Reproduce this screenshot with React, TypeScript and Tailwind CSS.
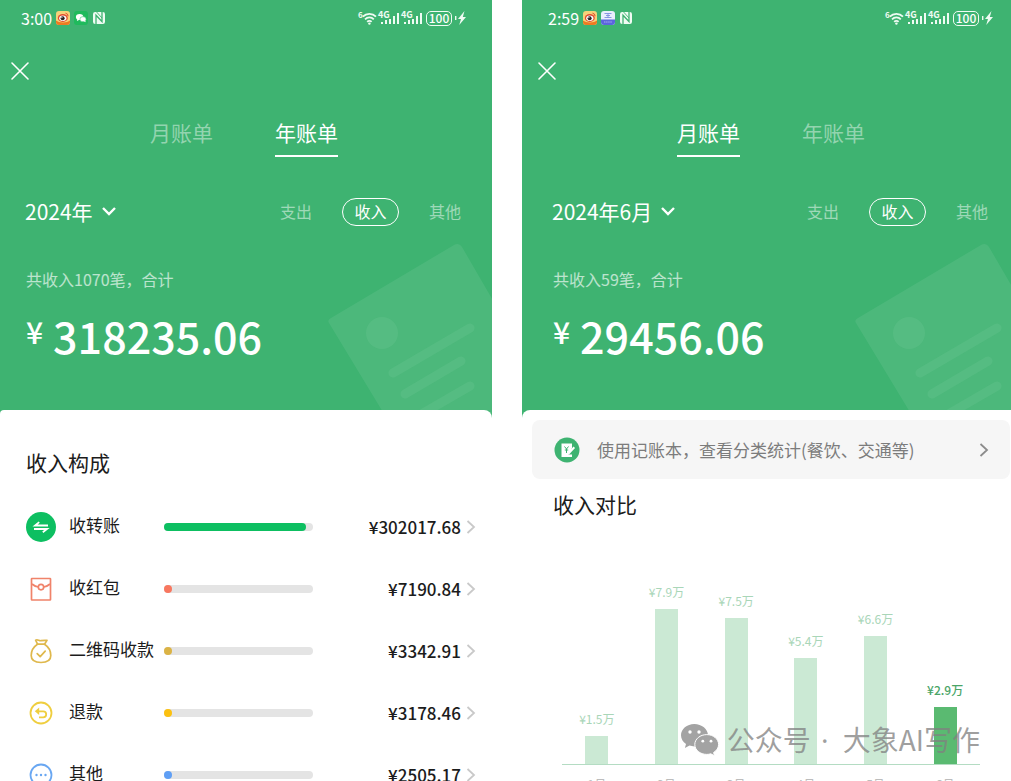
import type { ReactNode } from "react";
import clsx from "clsx";

const rows = [
  { label: "收转账", amount: "¥302017.68", percent: 95, bar: "bg-[#0dbf61]", icon: <TransferIcon /> },
  { label: "收红包", amount: "¥7190.84", percent: 3, bar: "bg-[#f8775f]", icon: <RedPacketIcon /> },
  { label: "二维码收款", amount: "¥3342.91", percent: 2, bar: "bg-[#dbb345]", icon: <MoneyBagIcon /> },
  { label: "退款", amount: "¥3178.46", percent: 2, bar: "bg-[#fcc110]", icon: <RefundIcon /> },
  { label: "其他", amount: "¥2505.17", percent: 1, bar: "bg-[#5f9ff5]", icon: <MoreIcon /> },
];

const months = [
  { month: "1月", label: "¥1.5万", height: 28 },
  { month: "2月", label: "¥7.9万", height: 155 },
  { month: "3月", label: "¥7.5万", height: 146 },
  { month: "4月", label: "¥5.4万", height: 106 },
  { month: "5月", label: "¥6.6万", height: 128 },
  { month: "6月", label: "¥2.9万", height: 57, active: true },
];

/* ---------- status bar ---------- */

function WeiboIcon() {
  return (
    <svg viewBox="0 0 14 14" className="size-3.5">
      <rect width="14" height="14" rx="3" fill="#f6d27a" />
      <path d="M0 9.5C3 12 11 12 14 9.5V11a3 3 0 0 1-3 3H3a3 3 0 0 1-3-3Z" fill="#ee7a22" />
      <ellipse cx="6.8" cy="7" rx="5" ry="3.9" fill="#e2492f" />
      <ellipse cx="6.8" cy="7.2" rx="3.6" ry="2.7" fill="#fff" />
      <circle cx="6.6" cy="7.2" r="2" fill="#2a2020" />
      <circle cx="5.9" cy="6.6" r="0.6" fill="#fff" />
      <path d="M9.5 2.2a3 3 0 0 1 2.6 3" stroke="#e2492f" strokeWidth="1" fill="none" />
    </svg>
  );
}

function WechatBadge() {
  return (
    <svg viewBox="0 0 14 14" className="size-3.5">
      <rect width="14" height="14" rx="3" fill="#1fba5c" />
      <ellipse cx="5.6" cy="6" rx="3.7" ry="3.1" fill="#fff" />
      <ellipse cx="9" cy="8.2" rx="3.1" ry="2.6" fill="#fff" stroke="#1fba5c" strokeWidth="0.5" />
      <path d="M3.2 8 2.9 9.9 5 8.9ZM10 10.3l1.6.9-.3-1.8Z" fill="#fff" />
    </svg>
  );
}

function AppBadge() {
  return (
    <svg viewBox="0 0 14 14" className="size-3.5">
      <rect width="14" height="14" rx="3" fill="#e9eefc" />
      <path d="M0 8.5h14V11a3 3 0 0 1-3 3H3a3 3 0 0 1-3-3Z" fill="#5b66dd" />
      <path d="M3.5 2.5h7M5 4.5h4M3.5 6.5h7M7 2.5v4" stroke="#7d8de0" strokeWidth="0.9" />
      <path d="M3 11h8" stroke="#a6aef2" strokeWidth="1.2" strokeDasharray="1.5 .6" />
    </svg>
  );
}

function NfcIcon() {
  return (
    <svg viewBox="0 0 14 14" className="size-3.5">
      <rect x="1" y="1" width="12" height="12" rx="2.2" fill="#effbf3" />
      <path d="M4 13V4.2l6 6.3V1" fill="none" stroke="#3eb371" strokeWidth="1.3" />
      <path d="M4.6 1 10 7" fill="none" stroke="#3eb371" strokeWidth="0.9" />
    </svg>
  );
}

function WifiIcon() {
  return (
    <svg viewBox="0 0 18 16" className="h-4 w-[18px] overflow-visible">
      <text x="-1" y="8" fontSize="8" fontWeight="700" fill="#effbf3">6</text>
      <g fill="none" stroke="#effbf3" strokeWidth="1.8">
        <path d="M3.8 6.6a9.2 9.2 0 0 1 13.2 0" />
        <path d="M6 9.3a6.2 6.2 0 0 1 8.8 0" />
        <path d="M8.2 11.9a3 3 0 0 1 4.4 0" />
      </g>
      <circle cx="10.4" cy="13.6" r="1.2" fill="#effbf3" />
    </svg>
  );
}

function SignalIcon() {
  return (
    <svg viewBox="0 0 20 16" className="h-4 w-5 overflow-visible" fill="#effbf3">
      <text x="-2" y="8" fontSize="9" fontWeight="700">4G</text>
      <rect x="1" y="12" width="2" height="2" />
      <rect x="5" y="10" width="2" height="4" />
      <rect x="9" y="9" width="2" height="5" />
      <rect x="13" y="6" width="2" height="8" />
      <rect x="17" y="3" width="2" height="11" />
    </svg>
  );
}

function StatusBar({ time, badge }: { time: string; badge: ReactNode }) {
  return (
    <div className="flex h-9 items-center justify-between pl-[21px] pr-[21px]">
      <div className="flex items-center gap-1">
        <span className="text-base leading-5">{time}</span>
        <WeiboIcon />
        {badge}
        <NfcIcon />
      </div>
      <div className="flex items-center gap-[3px]">
        <WifiIcon />
        <SignalIcon />
        <SignalIcon />
        <span className="flex h-[15px] w-[26px] items-center justify-center rounded-[5px] border border-[#effbf3] text-xs font-medium leading-4">
          100
        </span>
        <svg viewBox="0 0 12 16" className="h-4 w-3" fill="#effbf3">
          <rect x="0" y="6" width="1.4" height="4" />
          <path d="M9.5 1 3 9h3L4.2 15l6.8-8H7.8Z" />
        </svg>
      </div>
    </div>
  );
}

/* ---------- header ---------- */

function ReceiptArt() {
  return (
    <svg viewBox="0 0 164 175" className="pointer-events-none absolute -right-1 top-[240px] w-[164px]">
      <path
        d="M3 78 126 5Q131 2 134 7L220 155 90 230 1 83Q-1 80 3 78Z"
        fill="#fff"
        fillOpacity="0.075"
      />
      <circle cx="54" cy="93" r="16" fill="#5abf86" fillOpacity="0.65" />
      <g stroke="#5abf86" strokeOpacity="0.65" strokeWidth="9" strokeLinecap="round">
        <path d="m65 133 77-45M77 154l56-33M92 175l50-29" />
      </g>
    </svg>
  );
}

type HeaderProps = {
  time: string;
  badge: ReactNode;
  tab: string;
  period: string;
  summary: string;
  total: string;
  className: string;
};

function BillHeader({ time, badge, tab, period, summary, total, className }: HeaderProps) {
  return (
    <header className="overflow-hidden bg-[#3eb371] text-white">
      <div className={clsx("relative pb-[61px]", className)}>
        <div className="relative">
          <StatusBar time={time} badge={badge} />
          <button type="button" aria-label="关闭" className="ml-[10px] mt-[25px] block">
            <svg viewBox="0 0 20 20" className="size-5" stroke="#fff" strokeWidth="1.6" strokeLinecap="round">
              <path d="m2 2 16 16M18 2 2 18" />
            </svg>
          </button>

          <nav className="mt-9 flex justify-center gap-[62px] text-[21px] leading-[30px]">
            {["月账单", "年账单"].map((name) => (
              <button
                key={name}
                type="button"
                className={clsx(
                  "border-b-2 pb-2",
                  name === tab ? "border-white" : "border-transparent text-white/45",
                )}
              >
                {name}
              </button>
            ))}
          </nav>

          <div className="mt-[41px] flex h-7 items-center justify-between pl-[25px] pr-[27px]">
            <button type="button" className="flex items-center gap-2 pb-0.5 text-[21px] leading-7">
              {period}
              <svg viewBox="0 0 16 10" className="h-[10px] w-4" fill="none" stroke="#fff" strokeWidth="2.4">
                <path d="m2 2 6 6 6-6" />
              </svg>
            </button>
            <div className="flex items-center gap-[30px] text-base leading-6">
              <button type="button" className="pb-0.5 text-white/50">支出</button>
              <button type="button" className="h-7 w-[57px] rounded-full border border-white pb-0.5">收入</button>
              <button type="button" className="pb-0.5 text-white/50">其他</button>
            </div>
          </div>

          <p className="mt-[41px] pl-[26px] text-base leading-6 text-white/65">{summary}</p>
          <p className="mt-[22px] flex items-start gap-[10px] pl-[26px] font-medium">
            <span className="text-[30px] leading-9">¥</span>
            <span className="text-[43px] leading-[44px]">{total}</span>
          </p>
        </div>
        <ReceiptArt />
      </div>
    </header>
  );
}

/* ---------- income sources ---------- */

function TransferIcon() {
  return (
    <svg viewBox="0 0 30 30" className="size-[30px]">
      <circle cx="15" cy="15" r="15" fill="#0dbf61" />
      <path d="M22 13.5H9l4.2-3.4M8 17h13l-4.2 3.2" fill="none" stroke="#fff" strokeWidth="1.8" />
    </svg>
  );
}

function RedPacketIcon() {
  return (
    <svg viewBox="0 0 30 30" className="size-[30px]" fill="none" stroke="#f0836a" strokeWidth="1.7">
      <rect x="5.5" y="4.5" width="19" height="21.5" rx="0.5" />
      <path d="M6 10c2 1.8 4 2.6 6.2 3M24 10c-2 1.8-4 2.6-6.2 3" />
      <circle cx="15" cy="13.1" r="2.7" />
    </svg>
  );
}

function MoneyBagIcon() {
  return (
    <svg
      viewBox="0 0 30 30"
      className="size-[30px]"
      fill="none"
      stroke="#dfb84c"
      strokeWidth="1.7"
      strokeLinejoin="round"
      strokeLinecap="round"
    >
      <path d="M11.5 8.2C8 10.500 5.200 15 5.200 19.500c0 4.800 3.400 7 9.800 7s9.800-2.200 9.800-7c0-4.500-2.800-9-6.300-11.300Z" />
      <path d="M11.5 8.2 9.600 4.200c2-1.200 3.400.8 5.200.5 2.200-.4 4-.6 6.200-.3l-2.500 3.800" />
      <path d="m11.2 17.600 3 3 5-5.400" />
    </svg>
  );
}

function RefundIcon() {
  return (
    <svg viewBox="0 0 30 30" className="size-[30px]" fill="none" stroke="#efce3f" strokeWidth="1.8">
      <circle cx="15" cy="15" r="10.5" />
      <path d="M11 13.300h6.200a3 3 0 0 1 0 6H13" />
      <path d="M13.200 9.600v7.400l-4.400-3.700Z" fill="#efce3f" stroke="none" />
    </svg>
  );
}

function MoreIcon() {
  return (
    <svg viewBox="0 0 30 30" className="size-[30px]">
      <circle cx="15" cy="15" r="10.5" fill="none" stroke="#69a7f2" strokeWidth="1.8" />
      <g fill="#69a7f2">
        <circle cx="10.5" cy="15" r="1.2" />
        <circle cx="15" cy="15" r="1.2" />
        <circle cx="19.5" cy="15" r="1.2" />
      </g>
    </svg>
  );
}

function ChevronRight({ className }: { className: string }) {
  return (
    <svg viewBox="0 0 10 16" className={clsx("h-4 w-[10px]", className)} fill="none" stroke="currentColor" strokeWidth="1.8">
      <path d="m1.5 2 6.5 6-6.5 6" />
    </svg>
  );
}

function IncomeSources() {
  return (
    <section className="relative -mt-2 rounded-tl rounded-tr-lg bg-white pl-[26px] pr-4 pt-9">
      <h2 className="text-[21px] leading-8">收入构成</h2>
      <ul className="mt-[18px]">
        {rows.map((row) => (
          <li key={row.label}>
            <button type="button" className="flex h-[62px] w-full items-center text-left text-[17px]">
              {row.icon}
              <span className="ml-[13px] w-[95px] whitespace-nowrap pb-1 leading-6">{row.label}</span>
              <span className="h-2 w-[149px] rounded-full bg-[#e4e4e4]">
                <span className={clsx("block h-2 min-w-2 rounded-full", row.bar)} style={{ width: `${row.percent}%` }} />
              </span>
              <span className="ml-auto font-medium leading-6">{row.amount}</span>
              <ChevronRight className="ml-[5px] text-[#c9c9c9]" />
            </button>
          </li>
        ))}
      </ul>
    </section>
  );
}

/* ---------- monthly comparison ---------- */

function LedgerIcon() {
  return (
    <svg viewBox="0 0 26 26" className="size-[26px]">
      <circle cx="13" cy="13" r="12.5" fill="#3eb371" />
      <path d="M7.5 6.5H18V11l-3.5 6.5H18V20H7.5Z" fill="#fff" />
      <path d="m10.5 9.5 2 2.5 2-2.5M12.500 12v4M10.800 13h3.400" stroke="#3eb371" strokeWidth="1" fill="none" />
      <path d="m14.300 16.800 6-6.500" stroke="#fff" strokeWidth="2" />
    </svg>
  );
}

function WechatMark() {
  return (
    <svg viewBox="0 0 38 32" className="h-8 w-[38px]">
      <path
        d="M13.3 0C5.9 0 0 5 0 11.3c0 3.6 1.9 6.600 5 8.700L3.900 24l4.600-2.400c1.700.5 3 .8 4.800.8C20.700 22.400 27 17.500 27 11.300 27 5 20.700 0 13.300 0Z"
        fill="#a3a3a3"
      />
      <path
        d="M25.800 10.600c-6.700 0-12 4.400-12 9.900s5.300 9.900 12 9.900c1.400 0 2.700-.2 4-.6l3.700 2-.9-3.300c3-1.800 5-4.700 5-8 0-5.500-5.300-9.900-11.800-9.900Z"
        fill="#a3a3a3"
        stroke="#fff"
        strokeWidth="1"
      />
      <g fill="#fff">
        <circle cx="9" cy="8" r="1.7" />
        <circle cx="18" cy="8" r="1.7" />
        <circle cx="21.8" cy="17.2" r="1.4" />
        <circle cx="30" cy="17.2" r="1.4" />
      </g>
    </svg>
  );
}

function MonthlyComparison() {
  return (
    <section className="relative -mt-2 rounded-tl-lg bg-white pt-[10px]">
      <a href="#ledger" className="ml-[10px] mr-px flex h-[59px] items-center rounded-lg bg-[#f6f6f6] pl-[22px] pr-[21px]">
        <LedgerIcon />
        <span className="ml-[17px] whitespace-nowrap text-[17px] leading-6 text-[#7c7c7c]">
          使用记账本，查看分类统计(餐饮、交通等)
        </span>
        <ChevronRight className="ml-auto text-[#8c8c8c]" />
      </a>
      <h2 className="mt-[9px] pl-[31px] text-[21px] leading-8">收入对比</h2>

      <div className="relative ml-10 mr-[31px] mt-[44px]">
        <div className="grid h-[201px] grid-cols-6 items-end border-b border-[#b4dcc3]">
          {months.map((item) => (
            <div key={item.month} className="flex flex-col items-center gap-[7px]">
              <span className={clsx("text-xs leading-5", item.active ? "font-medium text-[#4aa567]" : "text-[#a9d6b8]")}>
                {item.label}
              </span>
              <div className={clsx("w-[23px]", item.active ? "bg-[#5aba71]" : "bg-[#cbe9d4]")} style={{ height: item.height }} />
            </div>
          ))}
        </div>
        <div className="mt-[9px] grid grid-cols-6 text-center text-xs leading-5 text-[#bdbdbd]">
          {months.map((item) => (
            <span key={item.month}>{item.month}</span>
          ))}
        </div>

        {/* account name laid over the chart */}
        <div className="absolute right-0 top-[157px] flex items-center gap-2 whitespace-nowrap text-[28px] leading-9 text-[#808080]/75">
          <WechatMark />
          <span>
            公众号 <span className="ml-1 mr-2 font-['Noto_Sans']">·</span> 大象AI写作
          </span>
        </div>
      </div>
    </section>
  );
}

export default function App() {
  return (
    <main className="grid h-screen grid-cols-[492fr_489fr] gap-[30px] overflow-hidden bg-white font-['Noto_Sans_CJK_SC',sans-serif] text-[#1c1c1c]">
      <article className="min-w-0">
        <BillHeader
          time="3:00"
          badge={<WechatBadge />}
          tab="年账单"
          period="2024年"
          summary="共收入1070笔，合计"
          total="318235.06"
          className="mr-1"
        />
        <IncomeSources />
      </article>
      <article className="min-w-0">
        <BillHeader
          time="2:59"
          badge={<AppBadge />}
          tab="月账单"
          period="2024年6月"
          summary="共收入59笔，合计"
          total="29456.06"
          className="-mr-1 ml-[5px]"
        />
        <MonthlyComparison />
      </article>
    </main>
  );
}
